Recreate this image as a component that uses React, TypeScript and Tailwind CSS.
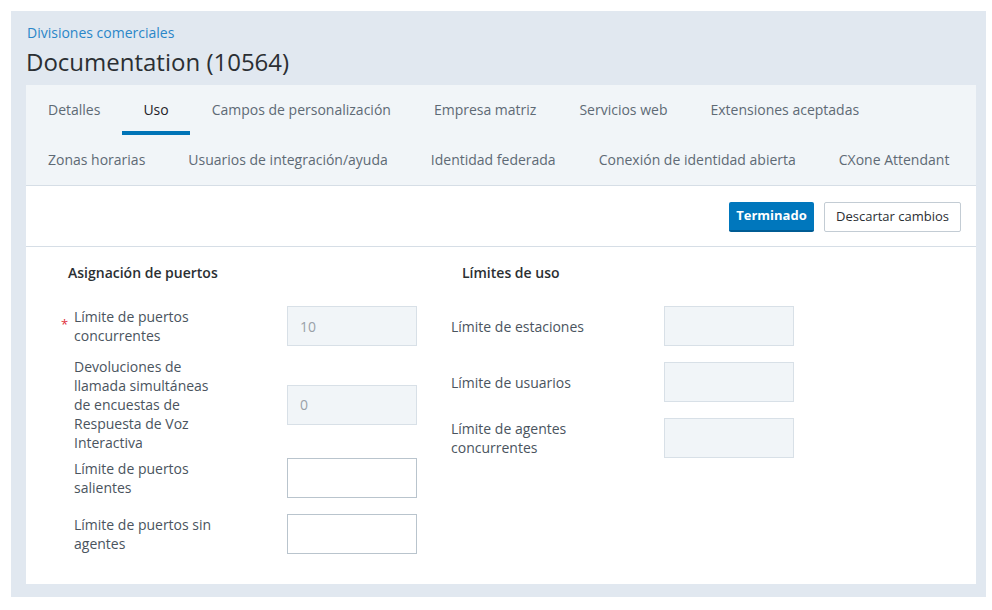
import React from 'react';

const font = { fontFamily: '"Open Sans", "Noto Sans", sans-serif' };

const row1 = ['Detalles', 'Uso', 'Campos de personalización', 'Empresa matriz', 'Servicios web', 'Extensiones aceptadas'];
const row2 = ['Zonas horarias', 'Usuarios de integración/ayuda', 'Identidad federada', 'Conexión de identidad abierta', 'CXone Attendant'];

const Tab = ({ label, active }: { label: string; active?: boolean }) => (
  <div className="relative shrink-0 h-[50px] px-[21.5px] flex items-center cursor-pointer whitespace-nowrap">
    <span className={`text-[14px] leading-[20px] -mt-[1px] ${active ? 'text-[#1f2328]' : 'text-[#5e6a75]'}`}>{label}</span>
    {active && <div className="absolute left-0 right-0 bottom-0 h-[4px] bg-[#0074b7]" />}
  </div>
);

const Field = ({ disabled, value }: { disabled?: boolean; value?: string }) => (
  <div
    className={`w-[130px] h-[40px] flex items-center px-[12px] text-[14px] text-[#9aa1a8] border ${
      disabled ? 'bg-[#f1f5f8] border-[#d8e0e7]' : 'bg-white border-[#b9c4cd]'
    }`}
  >
    {value}
  </div>
);

export default function App() {
  return (
    <div className="min-h-[610px] bg-white pt-[11px] pl-[11px] pr-[6px]" style={font}>
      <div className="bg-[#e1e8f0] h-[586px] pl-[15px] pr-[10px]">
        <div className="pt-[12px] pl-[1px] text-[14px] leading-[20px] text-[#2a86c8]">Divisiones comerciales</div>
        <h1 className="mt-[3px] text-[24px] leading-[32px] text-[#2b2f33]">Documentation (10564)</h1>

        <div className="mt-[7px] bg-white h-[499px]">
          <div className="bg-[#f1f5f8] border-b border-[#d6dee6] pl-[0.5px]">
            <div className="flex">
              {row1.map((t) => (
                <Tab key={t} label={t} active={t === 'Uso'} />
              ))}
            </div>
            <div className="flex">
              {row2.map((t) => (
                <Tab key={t} label={t} />
              ))}
            </div>
          </div>

          <div className="h-[61px] border-b border-[#d6dee6] flex items-start justify-end pt-[16px] pr-[15px] gap-[10px]">
            <button className="h-[30px] w-[85px] bg-[#0077bd] border-b-2 border-[#005c94] rounded-[2px] text-white text-[13px] font-bold">
              Terminado
            </button>
            <button className="h-[30px] w-[137px] bg-white border border-[#c3ccd4] rounded-[2px] text-[#2b2f33] text-[13px]">
              Descartar cambios
            </button>
          </div>

          <div className="flex pt-[16px]">
            <div className="w-[425px] pl-[42px]">
              <div className="text-[14px] leading-[20px] font-semibold text-[#2b2f33]">Asignación de puertos</div>

              <div className="mt-[23px] flex items-center">
                <div className="relative w-[219px] pl-[6px] text-[14px] leading-[19px] text-[#4a545e]">
                  <span className="absolute left-[-7px] top-[8px] text-[#e0303b] text-[13px]">*</span>
                  <div className="w-[150px]">Límite de puertos concurrentes</div>
                </div>
                <Field disabled value="10" />
              </div>

              <div className="mt-[11px] flex items-center">
                <div className="w-[219px] pl-[6px] text-[14px] leading-[19px] text-[#4a545e]">
                  <div className="w-[150px]">Devoluciones de llamada simultáneas de encuestas de Respuesta de Voz Interactiva</div>
                </div>
                <Field disabled value="0" />
              </div>

              <div className="mt-[6px] flex items-center">
                <div className="w-[219px] pl-[6px] text-[14px] leading-[19px] text-[#4a545e]">
                  <div className="w-[150px]">Límite de puertos salientes</div>
                </div>
                <Field />
              </div>

              <div className="mt-[16px] flex items-center">
                <div className="w-[219px] pl-[6px] text-[14px] leading-[19px] text-[#4a545e]">
                  <div className="w-[150px]">Límite de puertos sin agentes</div>
                </div>
                <Field />
              </div>
            </div>

            <div>
              <div className="pl-[11px] text-[14px] leading-[20px] font-semibold text-[#2b2f33]">Límites de uso</div>

              <div className="mt-[23px] flex flex-col gap-[16px]">
                {['Límite de estaciones', 'Límite de usuarios', 'Límite de agentes concurrentes'].map((l) => (
                  <div key={l} className="flex items-center">
                    <div className="w-[213px] text-[14px] leading-[19px] text-[#4a545e]">
                      <div className="w-[150px]">{l}</div>
                    </div>
                    <Field disabled />
                  </div>
                ))}
              </div>
            </div>
          </div>
        </div>
      </div>
    </div>
  );
}
